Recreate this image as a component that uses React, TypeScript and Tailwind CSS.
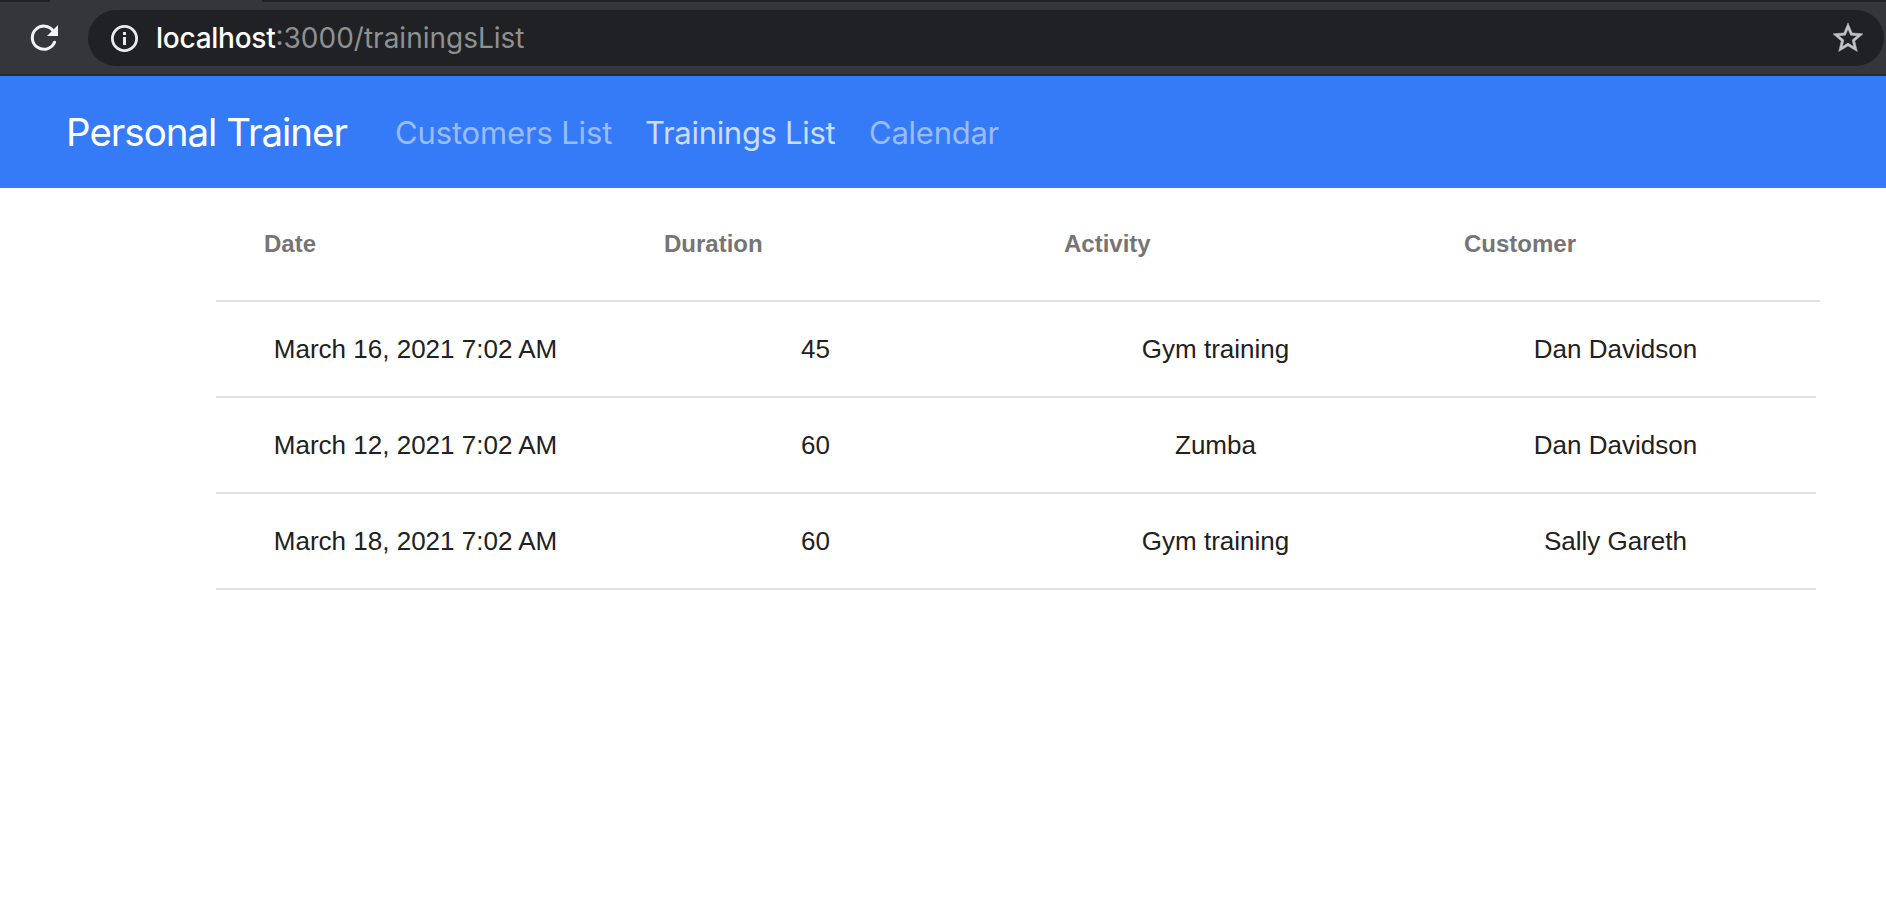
const links = [
  { label: "Customers List", style: "w-[218px] tracking-[-0.15px] text-white/50" },
  { label: "Trainings List", style: "w-[192px] tracking-[-0.3px] text-white/75" },
  { label: "Calendar", style: "tracking-[-0.25px] text-white/50" },
];

const columns = ["Date", "Duration", "Activity", "Customer"];

const rows = [
  ["March 16, 2021 7:02 AM", "45", "Gym training", "Dan Davidson"],
  ["March 12, 2021 7:02 AM", "60", "Zumba", "Dan Davidson"],
  ["March 18, 2021 7:02 AM", "60", "Gym training", "Sally Gareth"],
];

function ReloadIcon() {
  return (
    <svg className="ml-7 h-8 w-8 shrink-0" viewBox="0 0 32 32" fill="none">
      <path
        d="M26.6 20.2A11.6 11.6 0 1 1 25.5 9.2"
        stroke="#f1f3f4"
        strokeWidth="3"
        strokeLinecap="round"
      />
      <path d="M30 3v11H19z" fill="#f1f3f4" />
    </svg>
  );
}

function InfoIcon() {
  return (
    <svg className="h-7 w-7 shrink-0" viewBox="0 0 28 28" fill="none">
      <circle cx="13.5" cy="14.5" r="12.1" stroke="#e8eaed" strokeWidth="2.8" />
      <path d="M12 8h3v3h-3zM12 13h3v8h-3z" fill="#e8eaed" />
    </svg>
  );
}

function StarIcon() {
  return (
    <svg
      className="mr-[18px] ml-auto h-9 w-9 shrink-0"
      viewBox="0 0 24 24"
      fill="#c1c2c4"
      stroke="#c1c2c4"
      strokeWidth="0.3"
    >
      <path d="M22 9.24l-7.19-.62L12 2 9.19 8.63 2 9.24l5.46 4.73L5.82 21 12 17.27 18.18 21l-1.63-7.03L22 9.24zM12 15.4l-3.76 2.27 1-4.28-3.32-2.88 4.38-.38L12 6.1l1.71 4.04 4.38.38-3.32 2.88 1 4.28L12 15.4z" />
    </svg>
  );
}

function BrowserBar() {
  return (
    <div className="h-[76px] border-b-2 border-[#28292c] bg-[#35363a]">
      <div className="flex h-[2px] justify-between">
        <div className="w-[50px] rounded-br-[2px] bg-[#202124]" />
        <div className="w-[1624px] rounded-bl-[2px] bg-[#202124]" />
      </div>
      <div className="flex h-[72px] items-center">
        <ReloadIcon />
        <div className="ml-7 flex h-14 w-[1796px] items-center rounded-full bg-[#202124] pl-[23px]">
          <InfoIcon />
          <div className="ml-[17px] font-['Inter',sans-serif] text-[28px] leading-8 whitespace-nowrap text-[#8f9092]">
            <span className="font-medium tracking-[-0.25px] text-white">localhost</span>
            <span>:3000/trainingsList</span>
          </div>
          <StarIcon />
        </div>
      </div>
    </div>
  );
}

function NavBar() {
  return (
    <nav className="flex h-28 items-center bg-[#357af6] pl-[66px] font-['Inter',sans-serif] whitespace-nowrap">
      <a className="w-[329px] text-[38.5px] leading-[58px] tracking-[-1px] text-white">Personal Trainer</a>
      <div className="flex gap-8 pt-0.5 text-[31px] leading-[46px]">
        {links.map((link) => (
          <a key={link.label} className={link.style}>
            {link.label}
          </a>
        ))}
      </div>
    </nav>
  );
}

function TrainingsTable() {
  return (
    <div className="ml-[216px] w-[1604px] font-['Liberation_Sans',Arial,sans-serif]">
      <div className="flex h-[114px] items-center border-b-2 border-[#e2e2e2] text-2xl font-bold text-[#757575]">
        {columns.map((column) => (
          <div key={column} className="w-[400px] pl-12">
            {column}
          </div>
        ))}
      </div>
      {rows.map((row) => (
        <div
          key={row[0]}
          className="flex h-24 w-[1600px] items-center border-b-2 border-[#e2e2e2] text-center text-[26px] leading-[38px] text-[#212121]"
        >
          {row.map((cell, i) => (
            <div key={i} className="w-[400px] pr-px">
              {cell}
            </div>
          ))}
        </div>
      ))}
    </div>
  );
}

export default function App() {
  return (
    <div className="h-[912px] overflow-hidden bg-white">
      <BrowserBar />
      <NavBar />
      <TrainingsTable />
    </div>
  );
}
